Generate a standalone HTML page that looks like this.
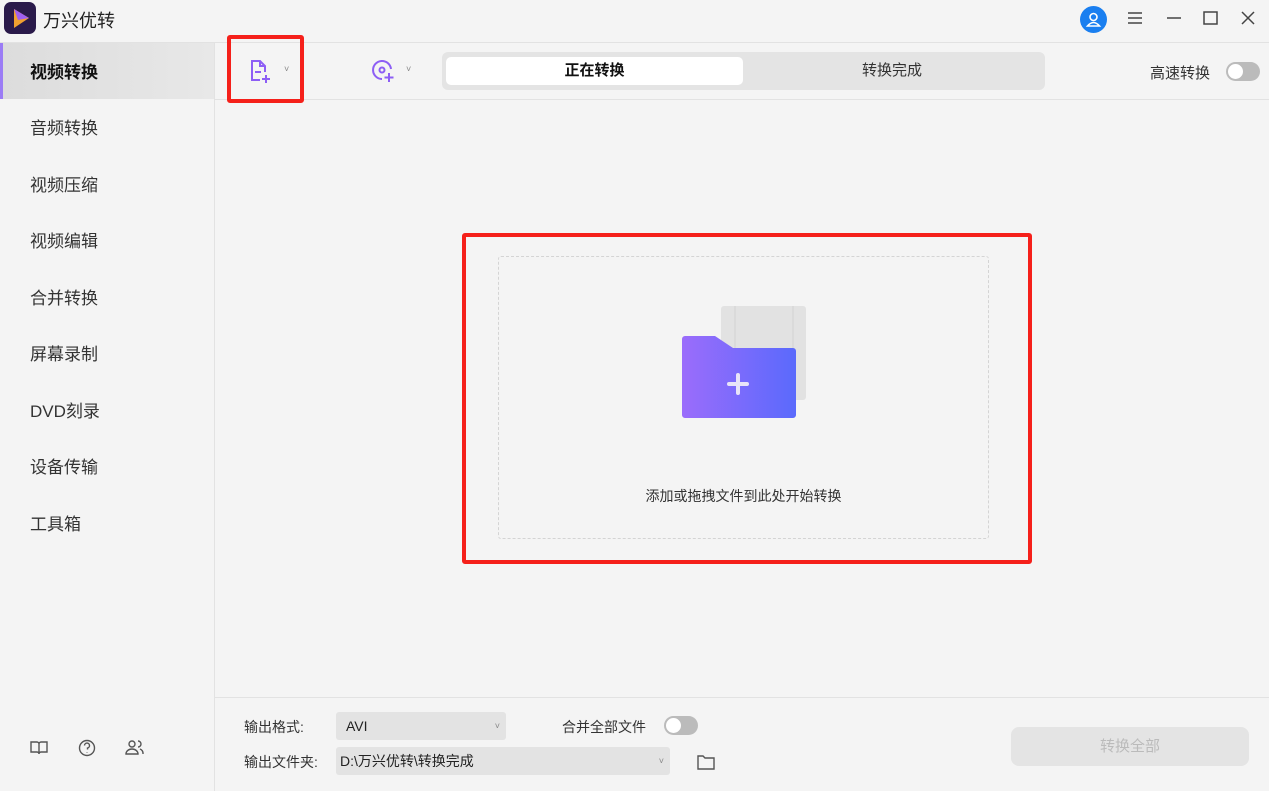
<!DOCTYPE html>
<html><head><meta charset="utf-8"><style>
*{margin:0;padding:0;box-sizing:border-box}
body{width:1269px;height:791px;background:#f4f4f4;font-family:"Liberation Sans","Noto Sans CJK SC",sans-serif;position:relative;overflow:hidden;color:#222}
.a{position:absolute}
.nav{left:30px;font-size:17px;color:#333;line-height:20px}
</style></head><body>
<div class="a" style="left:4px;top:2px;width:32px;height:32px;border-radius:7px;background:#2a1a4a"></div>
<svg class="a" style="left:4px;top:2px" width="32" height="32"><path d="M10 7 L25 16 L10 26 Z" fill="#f0a030"/><path d="M10 7 L25 16 L14 18 Z" fill="#a060f0"/></svg>
<div class="a" style="left:43px;top:7px;font-size:18px;color:#222">万兴优转</div>
<div class="a" style="left:1080px;top:6px;width:27px;height:27px;border-radius:50%;background:#1a7ff0"></div>
<svg class="a" style="left:1080px;top:6px" width="27" height="27" fill="none" stroke="#fff" stroke-width="1.6"><circle cx="13.5" cy="11" r="3.5"/><path d="M7.5 20 Q13.5 13 19.5 20 Z"/></svg>
<svg class="a" style="left:1125px;top:9px" width="140" height="20" fill="none" stroke="#444" stroke-width="1.5"><path d="M3 4h14M3 9h14M3 14h14"/><path d="M42 9h14"/><rect x="79" y="3" width="13" height="12"/><path d="M117 3l12 12M129 3l-12 12"/></svg>
<div class="a" style="left:0;top:42px;width:1269px;height:1px;background:#e2e2e2"></div>
<div class="a" style="left:214px;top:43px;width:1px;height:748px;background:#e2e2e2"></div>
<div class="a" style="left:0;top:43px;width:214px;height:56px;background:linear-gradient(90deg,#dcdcdc,#e8e8e8)"></div>
<div class="a" style="left:0;top:43px;width:3px;height:56px;background:#9b7cf5"></div>
<div class="a nav" style="top:63px;font-weight:bold;color:#111">视频转换</div>
<div class="a nav" style="top:119px">音频转换</div>
<div class="a nav" style="top:176px">视频压缩</div>
<div class="a nav" style="top:232px">视频编辑</div>
<div class="a nav" style="top:289px">合并转换</div>
<div class="a nav" style="top:345px">屏幕录制</div>
<div class="a nav" style="top:402px">DVD刻录</div>
<div class="a nav" style="top:458px">设备传输</div>
<div class="a nav" style="top:515px">工具箱</div>
<svg class="a" style="left:28px;top:737px" width="120" height="22" fill="none" stroke="#555" stroke-width="1.4"><path d="M3 5h6a2 2 0 0 1 2 2v10a2 2 0 0 0-2-2H3zM19 5h-6a2 2 0 0 0-2 2v10a2 2 0 0 1 2-2h6z"/><circle cx="59" cy="11" r="7.5"/><path d="M56.5 8.5a2.5 2.5 0 1 1 3 2.5v1.5M59 15v.5"/><circle cx="104" cy="7" r="3"/><path d="M98 17a6 5 0 0 1 12 0zM110 4a3 3 0 0 1 0 6M112 12a5 5 0 0 1 3 5"/></svg>
<div class="a" style="left:215px;top:99px;width:1054px;height:1px;background:#e2e2e2"></div>
<div class="a" style="left:227px;top:35px;width:77px;height:68px;border:4px solid #f5201a;border-radius:3px"></div>
<svg class="a" style="left:248px;top:58px" width="30" height="28" fill="none" stroke="#8d5ef5" stroke-width="2"><path d="M12 22H4V3h8l5 5v6M12 3v5h5M7 14h6M18 17v8M14 21h8"/></svg>
<div class="a" style="left:284px;top:64px;font-size:9px;color:#888">˅</div>
<svg class="a" style="left:370px;top:58px" width="30" height="28" fill="none" stroke="#8d5ef5" stroke-width="2"><path d="M21 11a9 9 0 1 0-9 10"/><circle cx="12" cy="12" r="2.5"/><path d="M19 15v9M14.5 19.5h9"/></svg>
<div class="a" style="left:406px;top:64px;font-size:9px;color:#888">˅</div>
<div class="a" style="left:442px;top:52px;width:603px;height:38px;background:#e4e4e4;border-radius:6px"></div>
<div class="a" style="left:446px;top:57px;width:297px;height:28px;background:#fff;border-radius:5px;text-align:center;line-height:28px;font-size:15px;font-weight:bold;color:#111">正在转换</div>
<div class="a" style="left:743px;top:57px;width:298px;height:28px;text-align:center;line-height:28px;font-size:15px;color:#333">转换完成</div>
<div class="a" style="left:1150px;top:62px;font-size:15px;color:#333">高速转换</div>
<div class="a" style="left:1226px;top:62px;width:34px;height:19px;border-radius:10px;background:#bbb"></div>
<div class="a" style="left:1228px;top:64px;width:15px;height:15px;border-radius:50%;background:#fff"></div>
<div class="a" style="left:462px;top:233px;width:570px;height:331px;border:4px solid #f5201a;border-radius:3px"></div>
<div class="a" style="left:498px;top:256px;width:491px;height:283px;border:1.5px dashed #d4d4d4;border-radius:3px"></div>
<svg class="a" style="left:680px;top:305px" width="128" height="115"><rect x="41" y="1" width="85" height="94" rx="3" fill="#e2e2e2"/><path d="M55 1v94M113 1v94" stroke="#d2d2d2"/><defs><linearGradient id="g"><stop offset="0" stop-color="#9b6cfb"/><stop offset="1" stop-color="#5a6afc"/></linearGradient></defs><path d="M2 34a3 3 0 0 1 3-3h30l18 12h60a3 3 0 0 1 3 3v64a3 3 0 0 1-3 3H5a3 3 0 0 1-3-3z" fill="url(#g)"/><path d="M58 70v18M49 79h18" stroke="#e8e4f8" stroke-width="4" stroke-linecap="round"/></svg>
<div class="a" style="left:498px;top:486px;width:491px;text-align:center;font-size:14px;color:#333">添加或拖拽文件到此处开始转换</div>
<div class="a" style="left:215px;top:697px;width:1054px;height:1px;background:#e2e2e2"></div>
<div class="a" style="left:244px;top:717px;font-size:14px;color:#333">输出格式:</div>
<div class="a" style="left:336px;top:712px;width:170px;height:28px;background:#e3e3e3;border-radius:3px;font-size:14px;line-height:28px;padding-left:10px">AVI<span style="position:absolute;right:6px;font-size:9px;color:#888">˅</span></div>
<div class="a" style="left:562px;top:717px;font-size:14px;color:#333">合并全部文件</div>
<div class="a" style="left:664px;top:716px;width:34px;height:19px;border-radius:10px;background:#bbb"></div>
<div class="a" style="left:666px;top:718px;width:15px;height:15px;border-radius:50%;background:#fff"></div>
<div class="a" style="left:244px;top:752px;font-size:14px;color:#333">输出文件夹:</div>
<div class="a" style="left:336px;top:747px;width:334px;height:28px;background:#e3e3e3;border-radius:3px;font-size:14px;line-height:28px;padding-left:4px">D:\万兴优转\转换完成<span style="position:absolute;right:6px;font-size:9px;color:#888">˅</span></div>
<svg class="a" style="left:696px;top:753px" width="20" height="18" fill="none" stroke="#555" stroke-width="1.4"><path d="M2 3h5l2 2h9v11H2z"/></svg>
<div class="a" style="left:1011px;top:727px;width:238px;height:39px;background:#e4e4e4;border-radius:8px;text-align:center;line-height:39px;font-size:15px;color:#bbb">转换全部</div>
</body></html>
